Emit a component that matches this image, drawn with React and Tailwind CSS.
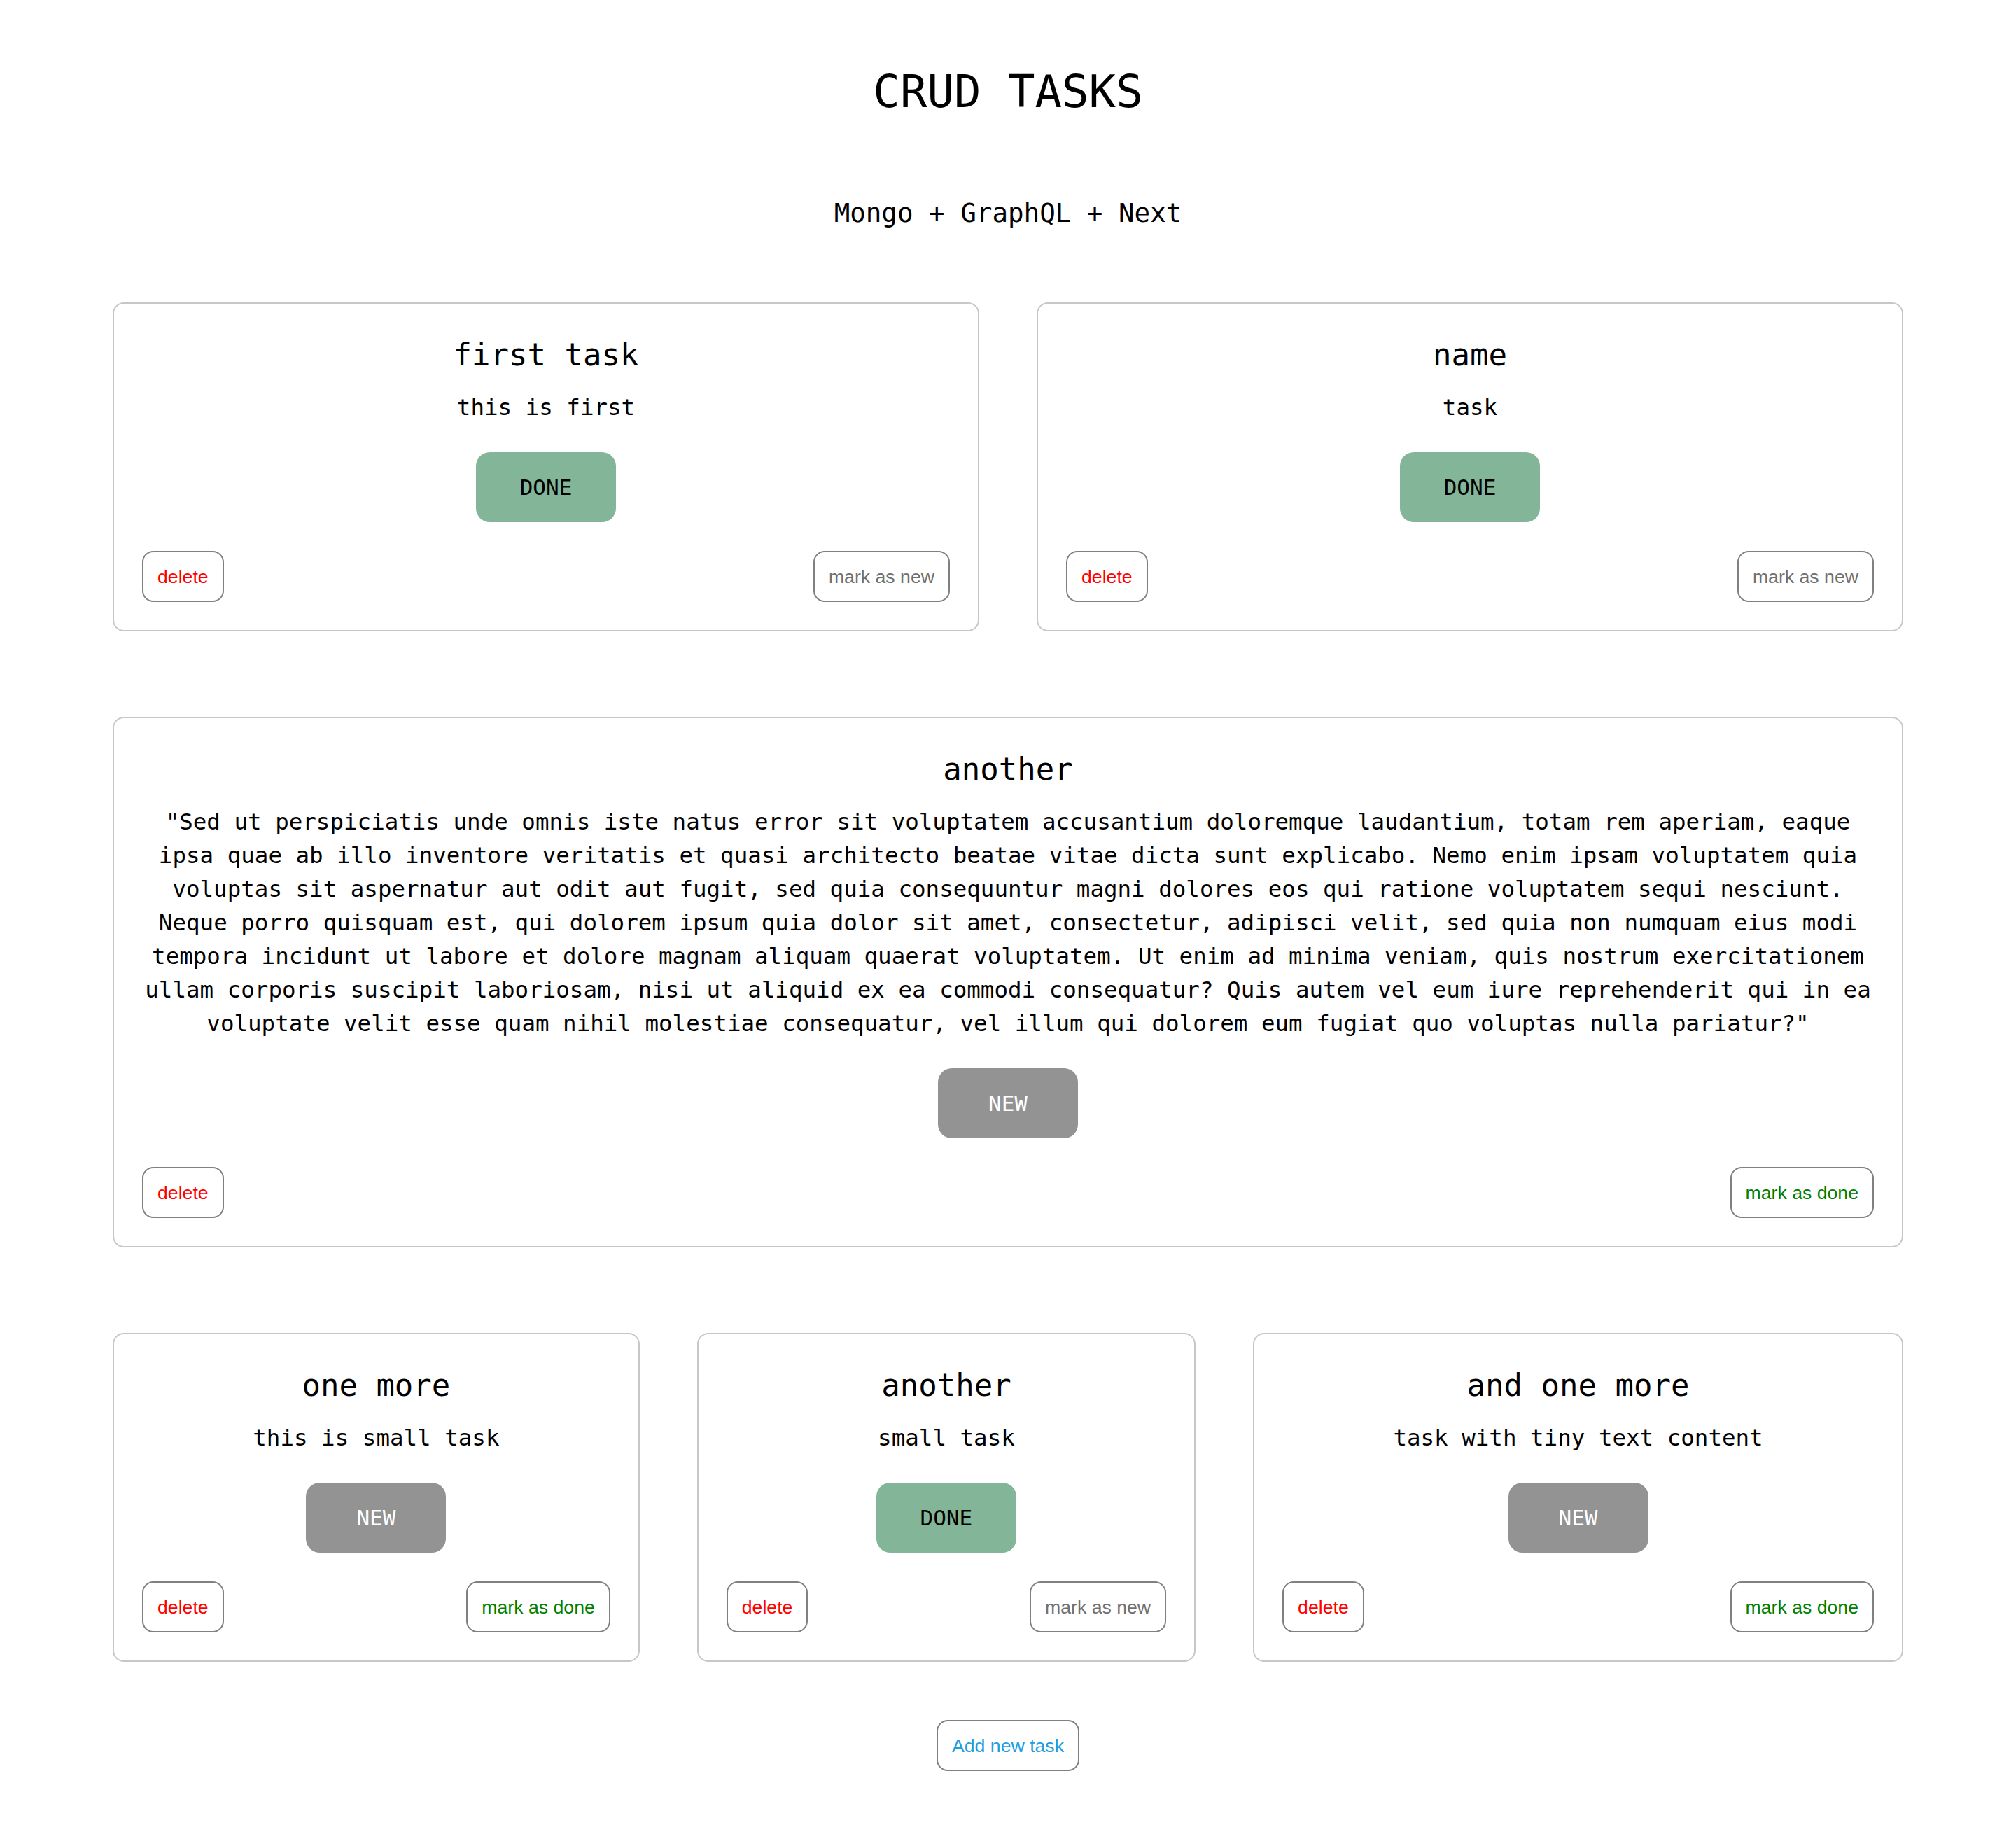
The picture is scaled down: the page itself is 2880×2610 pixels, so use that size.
const tasks = [
  { id: 1, name: 'first task', description: 'this is first', done: true },
  { id: 2, name: 'name', description: 'task', done: true },
  {
    id: 3,
    name: 'another',
    description:
      '"Sed ut perspiciatis unde omnis iste natus error sit voluptatem accusantium doloremque laudantium, totam rem aperiam, eaque ipsa quae ab illo inventore veritatis et quasi architecto beatae vitae dicta sunt explicabo. Nemo enim ipsam voluptatem quia voluptas sit aspernatur aut odit aut fugit, sed quia consequuntur magni dolores eos qui ratione voluptatem sequi nesciunt. Neque porro quisquam est, qui dolorem ipsum quia dolor sit amet, consectetur, adipisci velit, sed quia non numquam eius modi tempora incidunt ut labore et dolore magnam aliquam quaerat voluptatem. Ut enim ad minima veniam, quis nostrum exercitationem ullam corporis suscipit laboriosam, nisi ut aliquid ex ea commodi consequatur? Quis autem vel eum iure reprehenderit qui in ea voluptate velit esse quam nihil molestiae consequatur, vel illum qui dolorem eum fugiat quo voluptas nulla pariatur?"',
    done: false,
  },
  { id: 4, name: 'one more', description: 'this is small task', done: false },
  { id: 5, name: 'another', description: 'small task', done: true },
  { id: 6, name: 'and one more', description: 'task with tiny text content', done: false },
]

function SmallButton({ children, className }) {
  return (
    <button
      className={`flex h-[73px] items-center rounded-[16px] border-2 border-[#808080] bg-white px-[20px] font-['Liberation_Sans',Arial,sans-serif] text-[26.67px] leading-[30px] ${className}`}
    >
      {children}
    </button>
  )
}

function TaskCard({ task }) {
  return (
    <div className="flex flex-auto flex-col items-center rounded-[16px] border-2 border-[#c9c6c6] p-[40px] text-center">
      <h2 className="text-[44px] leading-[66px] whitespace-nowrap">{task.name}</h2>
      <p className="mt-[18px] text-[32.5px] leading-[48px]">{task.description}</p>
      {task.done ? (
        <div className="mt-[40px] flex h-[100px] w-[200px] items-center justify-center rounded-[20px] bg-[#83b598] text-[31px] text-black">
          DONE
        </div>
      ) : (
        <div className="mt-[40px] flex h-[100px] w-[200px] items-center justify-center rounded-[20px] bg-[#939393] text-[31px] text-white">
          NEW
        </div>
      )}
      <div className="mt-[41px] flex w-full justify-between">
        <SmallButton className="text-[#ff0000]">delete</SmallButton>
        {task.done ? (
          <SmallButton className="text-[#707070]">mark as new</SmallButton>
        ) : (
          <SmallButton className="text-[#008000]">mark as done</SmallButton>
        )}
      </div>
    </div>
  )
}

export default function App() {
  return (
    <div className="min-h-screen bg-white px-[161px] pb-[81px] font-['DejaVu_Sans_Mono',monospace] text-black">
      <h1 className="pt-[93px] text-center text-[64px] leading-[76px]">CRUD TASKS</h1>
      <h3 className="mt-[113px] text-center text-[37.5px] leading-[44px]">Mongo + GraphQL + Next</h3>

      <div className="mt-[106px] flex flex-wrap gap-x-[82px] gap-y-[122px]">
        {tasks.map((task) => (
          <TaskCard key={task.id} task={task} />
        ))}
      </div>

      <div className="mt-[83px] flex justify-center">
        <SmallButton className="text-[#1f9de0]">Add new task</SmallButton>
      </div>
    </div>
  )
}
